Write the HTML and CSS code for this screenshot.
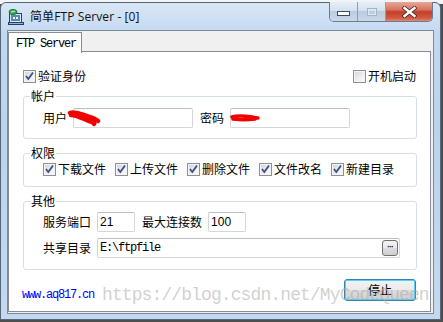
FILE: index.html
```html
<!DOCTYPE html>
<html>
<head>
<meta charset="utf-8">
<link rel="stylesheet" href="styles.css">
</head>
<body>
<div class="win">
  <div class="titlebar">
    <svg class="appicon" width="16" height="16" viewBox="0 0 16 16">
      <rect x="1.5" y="4.5" width="12" height="9" fill="#dfe8f2" stroke="#24406a"/>
      <rect x="3" y="6" width="9" height="6" fill="#4f86c6"/>
      <rect x="5" y="8" width="2" height="2" fill="#fff"/>
      <rect x="8" y="8" width="2" height="2" fill="#fff"/>
      <rect x="0.5" y="13.5" width="15" height="2" fill="#9fb3c8" stroke="#24406a"/>
      <ellipse cx="5" cy="3" rx="4" ry="2.5" fill="#35b35c" stroke="#1e6b38"/>
      <path d="M3 3 L7 2" stroke="#c8f2d4" stroke-width="1"/>
    </svg>
    <span class="title">简单FTP Server - [0]</span>
    <div class="caption">
      <div class="cbtn cmin"><span class="dash"></span></div>
      <div class="cbtn cmax"><span class="sq"></span></div>
      <div class="cbtn cclose">
        <svg width="15" height="12" viewBox="0 0 15 12"><path d="M2.5 2 L12.5 10 M12.5 2 L2.5 10" stroke="#3a2620" stroke-width="4" stroke-linecap="square"/><path d="M2.5 2 L12.5 10 M12.5 2 L2.5 10" stroke="#fff" stroke-width="2.4" stroke-linecap="square"/></svg>
      </div>
    </div>
  </div>
  <div class="client">
    <div class="tabs"><div class="tab">FTP Server</div></div>
    <div class="panel">
      <div class="toprow">
        <label class="chk"><span class="box"><svg width="11" height="11" viewBox="0 0 11 11"><path d="M2 5 L4.3 8 L9 1.5" fill="none" stroke="#3b4f8a" stroke-width="1.8"/></svg></span>验证身份</label>
        <label class="chk"><span class="box"></span>开机启动</label>
      </div>
      <fieldset class="grp g1">
        <legend>帐户</legend>
        <div class="row">
          <span class="lbl">用户</span>
          <span class="field wide"><svg class="scribble s1" width="34" height="18" viewBox="0 0 34 18"><path d="M3 4 C 8 2, 14 5, 20 7 C 25 9, 29 10, 31 12 M4 6 C 10 6, 16 10, 22 12 C 26 13, 28 14, 27 15" fill="none" stroke="#f20000" stroke-width="4.5" stroke-linecap="round"/></svg></span>
          <span class="lbl gap7">密码</span>
          <span class="field wide"><svg class="scribble s2" width="30" height="12" viewBox="0 0 30 12"><path d="M2 5 C 8 3, 16 4, 22 5 C 25 6, 27 6, 28 6 M3 7 C 10 8, 18 8, 25 7" fill="none" stroke="#f20000" stroke-width="3.5" stroke-linecap="round"/></svg></span>
        </div>
      </fieldset>
      <fieldset class="grp g2">
        <legend>权限</legend>
        <div class="perms">
          <label class="chk"><span class="box"><svg width="11" height="11" viewBox="0 0 11 11"><path d="M2 5 L4.3 8 L9 1.5" fill="none" stroke="#3b4f8a" stroke-width="1.8"/></svg></span>下载文件</label>
          <label class="chk"><span class="box"><svg width="11" height="11" viewBox="0 0 11 11"><path d="M2 5 L4.3 8 L9 1.5" fill="none" stroke="#3b4f8a" stroke-width="1.8"/></svg></span>上传文件</label>
          <label class="chk"><span class="box"><svg width="11" height="11" viewBox="0 0 11 11"><path d="M2 5 L4.3 8 L9 1.5" fill="none" stroke="#3b4f8a" stroke-width="1.8"/></svg></span>删除文件</label>
          <label class="chk"><span class="box"><svg width="11" height="11" viewBox="0 0 11 11"><path d="M2 5 L4.3 8 L9 1.5" fill="none" stroke="#3b4f8a" stroke-width="1.8"/></svg></span>文件改名</label>
          <label class="chk"><span class="box"><svg width="11" height="11" viewBox="0 0 11 11"><path d="M2 5 L4.3 8 L9 1.5" fill="none" stroke="#3b4f8a" stroke-width="1.8"/></svg></span>新建目录</label>
        </div>
      </fieldset>
      <fieldset class="grp g3">
        <legend>其他</legend>
        <div class="row">
          <span class="lbl">服务端口</span>
          <span class="field small"><span class="num">21</span></span>
          <span class="lbl gap7">最大连接数</span>
          <span class="field small"><span class="num">100</span></span>
        </div>
        <div class="row r2">
          <span class="lbl">共享目录</span>
          <span class="field path"><span class="mono">E:\ftpfile</span><span class="browse">&middot;&middot;&middot;</span></span>
        </div>
      </fieldset>
      <div class="footer">
        <span class="link">www.aq817.cn</span>
        <span class="btn">停止</span>
      </div>
      <div class="watermark">https://blog.csdn.net/MyCodeQueen</div>
    </div>
  </div>
</div>
</body>
</html>
```
FILE: styles.css
```css
html, body {
  margin: 0;
  padding: 0;
}
body {
  width: 443px;
  height: 322px;
  overflow: hidden;
  background: linear-gradient(to bottom, #f4f4f4 0, #f4f4f4 4px, #4e4e4e 4px);
  font-family: "Noto Sans CJK SC", "Liberation Sans", sans-serif;
  font-size: 12px;
  color: #000;
}
.win {
  margin-top: 2px;
  width: 441px;
  height: 318px;
  box-sizing: border-box;
  border: 1px solid #56667a;
  border-radius: 6px 6px 0 0;
  background: linear-gradient(to bottom, #d9e7f6 0%, #c2d8f0 10%, #bcd3ec 40%, #c4d9f0 100%);
  display: flex;
  flex-direction: column;
  padding: 0 6px 5px 6px;
}
.titlebar {
  height: 27px;
  display: flex;
  align-items: flex-start;
  flex-shrink: 0;
}
.appicon {
  margin-top: 6px;
  margin-left: 1px;
  flex-shrink: 0;
}
.title {
  margin-left: 6px;
  margin-top: 6px;
  font-family: "Open Sans", "Noto Sans CJK SC", sans-serif;
  font-size: 12px;
  line-height: 16px;
  color: #101010;
  letter-spacing: 0.1px;
}
.caption {
  margin-left: auto;
  margin-right: 1px;
  margin-top: -1px;
  display: flex;
  height: 20px;
  border: 1px solid #6b7b90;
  border-top: none;
  border-radius: 0 0 5px 5px;
  overflow: hidden;
  box-sizing: border-box;
}
.cbtn {
  height: 19px;
  display: flex;
  align-items: center;
  justify-content: center;
}
.cmin, .cmax {
  width: 27px;
  background: linear-gradient(to bottom, #e6eef8 0%, #d5e1ef 45%, #bccce0 50%, #c9d8ea 100%);
  border-right: 1px solid #8c9cb2;
}
.cmin .dash {
  width: 11px;
  height: 3px;
  background: #fff;
  border: 1px solid #3a4a60;
  margin-top: 4px;
}
.cmax .sq {
  width: 8px;
  height: 6px;
  border: 1px solid #a8b4c4;
  box-shadow: inset 0 0 0 1px #e0e8f2;
}
.cclose {
  width: 46px;
  background: linear-gradient(to bottom, #e7a898 0%, #d9735f 40%, #c2402a 52%, #d35a42 85%, #e08a70 100%);
}
.client {
  flex: 1;
  border: 1px solid #7d8a99;
  background: #f0f0f0;
  display: flex;
  flex-direction: column;
  padding: 1px 2px 1px 0;
}
.tabs {
  display: flex;
  height: 20px;
  position: relative;
  z-index: 1;
  margin-bottom: -1px;
}
.tab {
  width: 74px;
  height: 21px;
  box-sizing: border-box;
  border: 1px solid #898c95;
  border-bottom: none;
  background: #fff;
  font-family: "Liberation Mono", monospace;
  font-size: 12px;
  letter-spacing: -1.2px;
  line-height: 20px;
  padding-left: 7px;
  padding-top: 1px;
}
.panel {
  flex: 1;
  position: relative;
  border: 1px solid #898c95;
  background: #fff;
  padding: 16px 13px 0 14px;
  display: flex;
  flex-direction: column;
}
.toprow {
  display: flex;
  justify-content: space-between;
  height: 16px;
  padding-right: 1px;
}
.chk {
  display: flex;
  align-items: center;
  line-height: 16px;
  white-space: nowrap;
}
.box {
  width: 13px;
  height: 13px;
  box-sizing: border-box;
  border: 1px solid #8e8f8f;
  background: linear-gradient(135deg, #d0d3d8 0%, #eef0f2 60%, #fbfbfb 100%);
  box-shadow: inset 0 0 0 1px #f4f4f4;
  margin-right: 2px;
  display: flex;
  align-items: center;
  justify-content: center;
  flex-shrink: 0;
}
.box svg {
  display: block;
}
.grp {
  margin: 0;
  border: 1px solid #d5dfe5;
  border-radius: 3px;
  min-width: 0;
}
.grp legend {
  padding: 0 1px;
  margin-left: 6px;
  line-height: 16px;
  font-size: 12px;
}
.grp > .row, .grp > .perms {
  margin-left: 19px;
}
.g1 {
  margin-top: 4px;
  padding: 4px 0 10px 0;
}
.g2 {
  margin-top: 6px;
  padding: 0 0 9px 0;
}
.g3 {
  margin-top: 6px;
  padding: 3px 0 11px 0;
}
.row {
  display: flex;
  align-items: center;
  height: 20px;
}
.row.r2 {
  margin-top: 6px;
}
.lbl {
  white-space: nowrap;
  margin-right: 6px;
  line-height: 16px;
}
.lbl.gap7 {
  margin-left: 7px;
}
.field {
  position: relative;
  height: 20px;
  box-sizing: border-box;
  border: 1px solid #d3d6db;
  border-top-color: #b9bdc4;
  border-radius: 2px;
  background: #fff;
  display: flex;
  align-items: center;
}
.field.wide {
  width: 120px;
}
.field.small {
  width: 38px;
}
.field.path {
  width: 303px;
}
.num {
  font-family: "Liberation Sans", sans-serif;
  font-size: 12px;
  padding-left: 2px;
}
.mono {
  font-family: "Liberation Mono", monospace;
  font-size: 12px;
  letter-spacing: -1.2px;
  padding-left: 2px;
}
.browse {
  position: absolute;
  right: 1px;
  top: 1px;
  width: 16px;
  height: 16px;
  box-sizing: border-box;
  border: 1px solid #707070;
  border-radius: 3px;
  background: linear-gradient(to bottom, #f2f2f2 0%, #ebebeb 50%, #dddddd 51%, #cfcfcf 100%);
  font-family: "Liberation Sans", sans-serif;
  font-size: 9px;
  font-weight: bold;
  line-height: 12px;
  text-align: center;
  letter-spacing: -1px;
  color: #222;
}
.scribble {
  position: absolute;
  pointer-events: none;
}
.s1 {
  left: -7px;
  top: 0px;
}
.s2 {
  left: -1px;
  top: 3px;
}
.perms {
  display: flex;
  gap: 9px;
  height: 16px;
}
.footer {
  margin-top: 9px;
  display: flex;
  justify-content: space-between;
  align-items: flex-end;
  padding-right: 1px;
}
.link {
  font-family: "Liberation Mono", monospace;
  font-size: 12px;
  letter-spacing: -1.2px;
  color: #0000ff;
  margin-left: -1px;
  line-height: 14px;
  margin-bottom: -1px;
}
.btn {
  width: 72px;
  height: 22px;
  box-sizing: border-box;
  border: 1px solid #3c7fb1;
  border-radius: 3px;
  box-shadow: inset 0 0 0 1px #4fd3fb;
  background: linear-gradient(to bottom, #f3f3f3 0%, #ebebeb 48%, #dddddd 52%, #cfcfcf 100%);
  text-align: center;
  line-height: 20px;
}
.watermark {
  position: absolute;
  left: 93px;
  top: 232px;
  font-family: "Liberation Mono", monospace;
  font-size: 18px;
  letter-spacing: -0.9px;
  color: rgba(170, 170, 170, 0.55);
  white-space: nowrap;
  line-height: 22px;
  pointer-events: none;
}
```
